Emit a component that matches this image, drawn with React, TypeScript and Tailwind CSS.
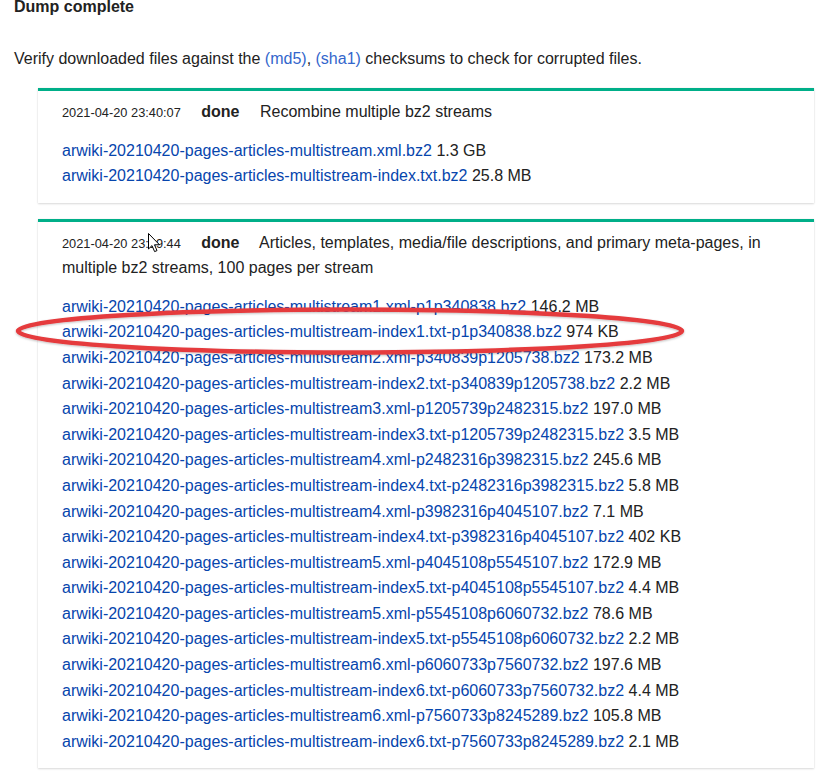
import React from "react";

const P = "arwiki-20210420-pages-articles-multistream";

const box1Files: [string, string][] = [
  [`${P}.xml.bz2`, "1.3 GB"],
  [`${P}-index.txt.bz2`, "25.8 MB"],
];

const box2Files: [string, string][] = [
  [`${P}1.xml-p1p340838.bz2`, "146.2 MB"],
  [`${P}-index1.txt-p1p340838.bz2`, "974 KB"],
  [`${P}2.xml-p340839p1205738.bz2`, "173.2 MB"],
  [`${P}-index2.txt-p340839p1205738.bz2`, "2.2 MB"],
  [`${P}3.xml-p1205739p2482315.bz2`, "197.0 MB"],
  [`${P}-index3.txt-p1205739p2482315.bz2`, "3.5 MB"],
  [`${P}4.xml-p2482316p3982315.bz2`, "245.6 MB"],
  [`${P}-index4.txt-p2482316p3982315.bz2`, "5.8 MB"],
  [`${P}4.xml-p3982316p4045107.bz2`, "7.1 MB"],
  [`${P}-index4.txt-p3982316p4045107.bz2`, "402 KB"],
  [`${P}5.xml-p4045108p5545107.bz2`, "172.9 MB"],
  [`${P}-index5.txt-p4045108p5545107.bz2`, "4.4 MB"],
  [`${P}5.xml-p5545108p6060732.bz2`, "78.6 MB"],
  [`${P}-index5.txt-p5545108p6060732.bz2`, "2.2 MB"],
  [`${P}6.xml-p6060733p7560732.bz2`, "197.6 MB"],
  [`${P}-index6.txt-p6060733p7560732.bz2`, "4.4 MB"],
  [`${P}6.xml-p7560733p8245289.bz2`, "105.8 MB"],
  [`${P}-index6.txt-p7560733p8245289.bz2`, "2.1 MB"],
];

function Box({
  date,
  title,
  files,
}: {
  date: string;
  title: string;
  files: [string, string][];
}) {
  return (
    <div className="ml-[24px] mb-[16px] border-t-[3px] border-[#00af89] bg-white pl-[24px] pr-[24px] pt-[8px] pb-[14px] shadow-[0_1px_2px_rgba(0,0,0,0.14),0_0_1px_rgba(0,0,0,0.10)]">
      <div>
        <span className="text-[12.8px]">{date}</span>{" "}
        <span className="font-bold px-[16px]">done</span>{" "}
        <span>{title}</span>
      </div>
      <ul className="mt-[12.8px]">
        {files.map(([name, size]) => (
          <li key={name}>
            <a className="text-[#0645ad]" href="#">
              {name}
            </a>{" "}
            {size}
          </li>
        ))}
      </ul>
    </div>
  );
}

export default function App() {
  return (
    <div className="relative w-[824px] h-[775px] overflow-hidden bg-white pl-[14px] pr-[10px] text-[16px] leading-[1.6] text-[#222] font-['Liberation_Sans',Arial,sans-serif]">
      <h3 className="mt-[-6px] font-bold">Dump complete</h3>
      <p className="mt-[26px]">
        Verify downloaded files against the{" "}
        <a className="text-[#3366cc]" href="#">
          (md5)
        </a>
        ,{" "}
        <a className="text-[#3366cc]" href="#">
          (sha1)
        </a>{" "}
        checksums to check for corrupted files.
      </p>
      <div className="mt-[17px]">
        <Box
          date="2021-04-20 23:40:07"
          title="Recombine multiple bz2 streams"
          files={box1Files}
        />
        <Box
          date="2021-04-20 23:39:44"
          title="Articles, templates, media/file descriptions, and primary meta-pages, in multiple bz2 streams, 100 pages per stream"
          files={box2Files}
        />
      </div>

      {/* red annotation ellipse */}
      <svg
        className="absolute left-0 top-0 pointer-events-none"
        width="824"
        height="775"
        viewBox="0 0 824 775"
      >
        <defs>
          <filter id="sh" x="-10%" y="-50%" width="120%" height="200%">
            <feDropShadow dx="0" dy="1" stdDeviation="1" floodColor="#000" floodOpacity="0.25" />
          </filter>
        </defs>
        <ellipse
          cx="350"
          cy="331"
          rx="332"
          ry="21.5"
          fill="none"
          stroke="#e53a3d"
          strokeWidth="4.5"
          filter="url(#sh)"
        />
      </svg>

      {/* mouse cursor */}
      <svg
        className="absolute left-[148px] top-[233px] pointer-events-none"
        width="13"
        height="20"
        viewBox="0 0 13 20"
      >
        <path
          d="M0.5 0.5 L0.5 16 L4 12.6 L6.6 18.6 L9 17.6 L6.5 11.8 L11.5 11.8 Z"
          fill="#fff"
          stroke="#000"
          strokeWidth="1"
          strokeLinejoin="round"
        />
      </svg>
    </div>
  );
}
